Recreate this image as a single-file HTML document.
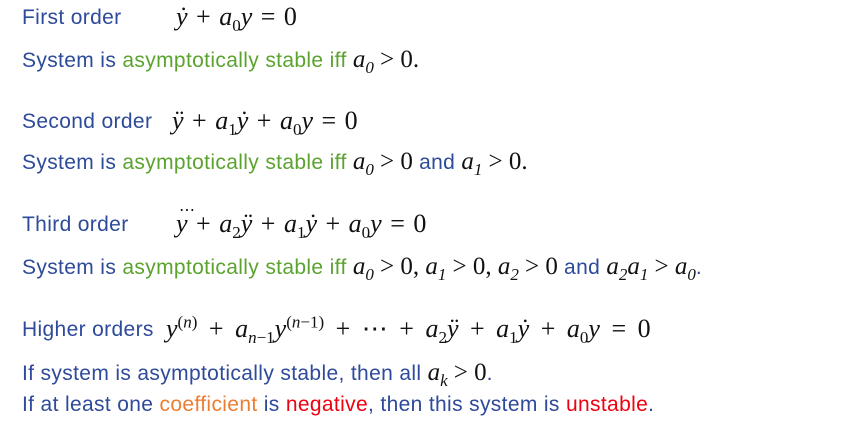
<!DOCTYPE html>
<html><head><meta charset="utf-8"><style>
body{margin:0;width:860px;height:423px;background:#fff;position:relative;overflow:hidden;font-family:"Liberation Sans",sans-serif;font-size:21px;color:#2e4a9a;}
.l{position:absolute;left:22px;white-space:nowrap;line-height:26px;letter-spacing:0.35px}
.g{color:#5ba32f}.o{color:#ed7d31}.r{color:#f00010}
.m{font-family:"Liberation Serif",serif;font-size:25px;color:#111;letter-spacing:0}
.eq.m{font-size:26px;word-spacing:2px}
.i{font-style:italic}
sub,sup{font-size:17px;line-height:0}
.eq{position:absolute;white-space:nowrap;line-height:26px}
.td{position:relative;display:inline-block}
.td b{position:absolute;left:3px;top:-13px;font-weight:normal;font-style:normal;font-size:16px}
</style></head><body>
<div class="l" style="top:5px">First order</div>
<div class="eq m" style="left:176px;top:4px"><span class="i">ẏ</span> + <span class="i">a</span><sub>0</sub><span class="i">y</span> = 0</div>
<div class="l" style="top:47px">System is <span class="g">asymptotically stable iff</span> <span class="m o i">a<sub>0</sub></span> <span class="m g">&gt; 0.</span></div>

<div class="l" style="top:109px">Second order</div>
<div class="eq m" style="left:172px;top:108px"><span class="i">ÿ</span> + <span class="i">a</span><sub>1</sub><span class="i">ẏ</span> + <span class="i">a</span><sub>0</sub><span class="i">y</span> = 0</div>
<div class="l" style="top:149px">System is <span class="g">asymptotically stable iff</span> <span class="m o i">a<sub>0</sub></span> <span class="m g">&gt; 0</span> and <span class="m o i">a<sub>1</sub></span> <span class="m g">&gt; 0.</span></div>

<div class="l" style="top:212px">Third order</div>
<div class="eq m" style="left:176px;top:211px"><span class="i td">y<b>⋯</b></span> + <span class="i">a</span><sub>2</sub><span class="i">ÿ</span> + <span class="i">a</span><sub>1</sub><span class="i">ẏ</span> + <span class="i">a</span><sub>0</sub><span class="i">y</span> = 0</div>
<div class="l" style="top:254px">System is <span class="g">asymptotically stable iff</span> <span class="m o i">a<sub>0</sub></span> <span class="m g">&gt; 0,</span> <span class="m o i">a<sub>1</sub></span> <span class="m g">&gt; 0,</span> <span class="m o i">a<sub>2</sub></span> <span class="m g">&gt; 0</span> and <span class="m o i">a<sub>2</sub>a<sub>1</sub></span> <span class="m g">&gt;</span> <span class="m o i">a<sub>0</sub></span>.</div>

<div class="l" style="top:317px">Higher orders</div>
<div class="eq m" style="left:166px;top:316px;word-spacing:5px"><span class="i">y</span><sup>(<span class="i">n</span>)</sup> + <span class="i">a</span><sub><span class="i">n</span>−1</sub><span class="i">y</span><sup>(<span class="i">n</span>−1)</sup> + ⋯ + <span class="i">a</span><sub>2</sub><span class="i">ÿ</span> + <span class="i">a</span><sub>1</sub><span class="i">ẏ</span> + <span class="i">a</span><sub>0</sub><span class="i">y</span> = 0</div>
<div class="l" style="top:360px">If system is asymptotically stable, then all <span class="m o i">a<sub>k</sub></span> <span class="m g">&gt; 0</span>.</div>
<div class="l" style="top:392px">If at least one <span class="o">coefficient</span> is <span class="r">negative</span>, then this system is <span class="r">unstable</span>.</div>
</body></html>
